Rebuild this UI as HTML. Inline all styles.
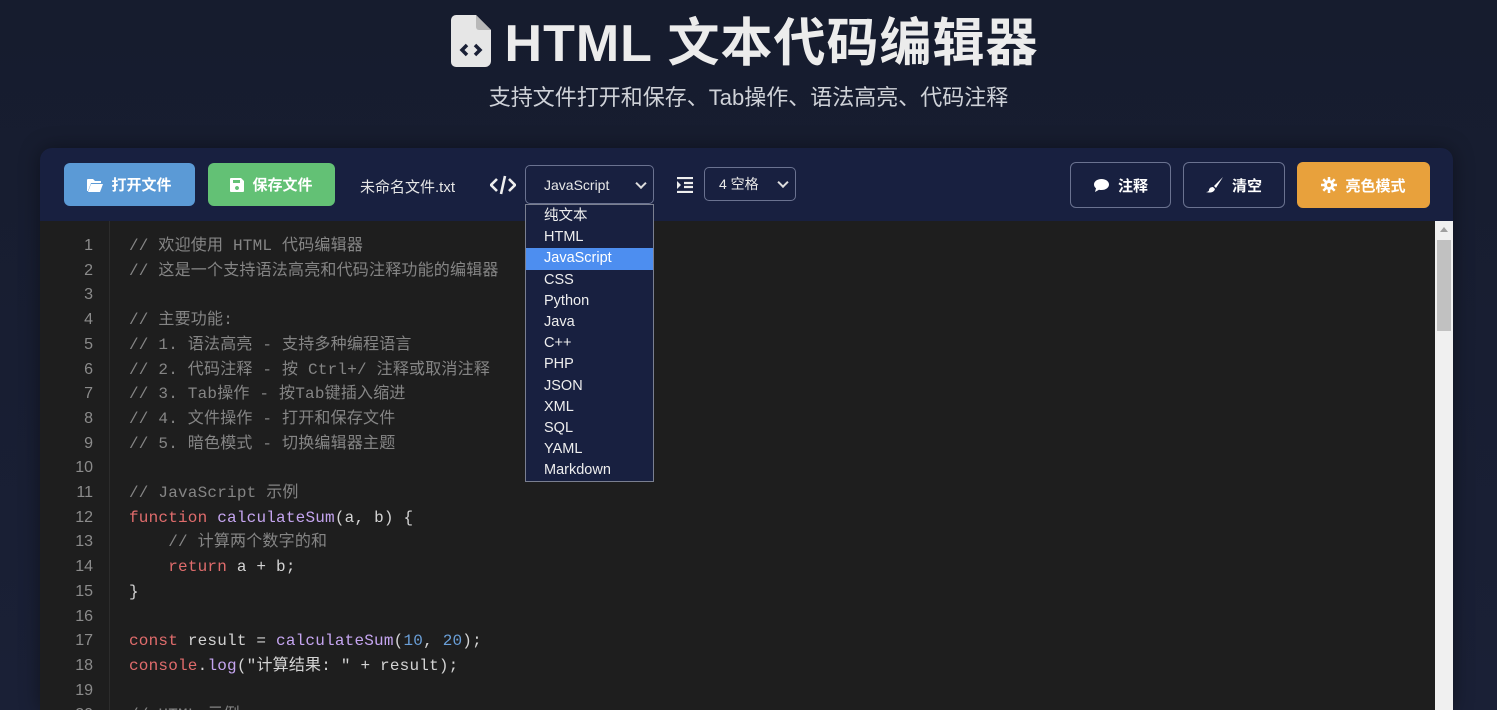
<!DOCTYPE html>
<html><head><meta charset="utf-8"><style>
*{box-sizing:border-box;margin:0;padding:0}
html,body{width:1497px;height:710px;overflow:hidden}
body{background:linear-gradient(180deg,#161c2e 0%,#1a2036 100%);font-family:"Liberation Sans","Noto Sans CJK SC",sans-serif;color:#e6e6e6;position:relative}
h1{position:absolute;top:1px;left:-4px;width:1497px;text-align:center;font-size:52px;font-weight:bold;color:#ececec;letter-spacing:1px}
.sub{position:absolute;top:80px;left:0;width:1497px;text-align:center;font-size:22px;color:#cfd2d8}
.panel{position:absolute;left:40px;top:148px;width:1413px;height:562px;background:#182040;border-radius:12px 12px 0 0;overflow:hidden;box-shadow:0 0 20px rgba(0,0,0,.4)}
.btn{position:absolute;border-radius:6px;font-size:15px;font-weight:bold;color:#fff;display:flex;align-items:center;justify-content:center;gap:8px}
.sel{position:absolute;border:1px solid #6a7290;border-radius:5px;background:#182040;font-size:14px;color:#e8e8e8;padding-left:18px;display:flex;align-items:center}
.sel:after{content:"";position:absolute;right:8px;top:50%;width:6px;height:6px;border-right:2px solid #ddd;border-bottom:2px solid #ddd;transform:translateY(-70%) rotate(45deg)}
.ob{background:transparent;border:1px solid #6a7290}
.editor{position:absolute;left:0;top:73px;width:1413px;height:500px;background:#1e1e1e}
.gut{position:absolute;left:0;top:0;width:70px;height:100%;background:#1e1e1e;border-right:1px solid #2c2c2c}
.ln,.code{position:absolute;top:13px;font-family:"Liberation Mono","Noto Sans CJK SC",monospace;font-size:16px;line-height:24.7px;white-space:pre}
.ln{left:0;width:53px;text-align:right;color:#8b8b8b;font-family:"Liberation Sans",sans-serif}
.code{left:89px;color:#d4d4d4;letter-spacing:0.2px}
.c{color:#858585}.k{color:#e06c6c}.f{color:#c5a5f0}.n{color:#6a9fd8}
.sb{position:absolute;left:1395px;top:0;width:18px;height:100%;background:#f0f0f0}
.dd{position:absolute;left:525px;top:204px;width:129px;height:278px;background:#182040;border:1px solid #7a7f90;font-size:14.5px;color:#eee;padding-top:1px}
.dd div{height:21.2px;line-height:21px;padding-left:18px}
.dd .hi{background:#4d8ef0;color:#fff}
</style></head><body>
<h1><svg width="40" height="52" viewBox="0 0 40 52" style="vertical-align:-6px;margin-right:14px"><path d="M5 0h20l15 15v31a6 6 0 0 1-6 6H5a5 5 0 0 1-5-5V5a5 5 0 0 1 5-5z" fill="#e6e6e6"/><path d="M25 0v12a3 3 0 0 0 3 3h12" fill="#b8b8b8"/><path d="M16 30l-5 5 5 5M24 30l5 5-5 5" stroke="#1a2036" stroke-width="3.5" fill="none"/></svg>HTML 文本代码编辑器</h1>
<div class="sub">支持文件打开和保存、Tab操作、语法高亮、代码注释</div>
<div class="panel">
<div class="btn" style="left:24px;top:15px;width:131px;height:43px;background:#5b9ad6"><svg width="16" height="14" viewBox="0 0 16 14"><path d="M0 2a1 1 0 0 1 1-1h5l2 2h6v2H4L1 13H0z M4 6h12l-3 8H1z" fill="#fff"/></svg>打开文件</div>
<div class="btn" style="left:168px;top:15px;width:127px;height:43px;background:#63c175"><svg width="14" height="14" viewBox="0 0 14 14"><path d="M1 0h10l3 3v10a1 1 0 0 1-1 1H1a1 1 0 0 1-1-1V1a1 1 0 0 1 1-1zM3 2v3h7V2zM7 8a2 2 0 1 0 0.01 0z" fill="#fff" fill-rule="evenodd"/></svg>保存文件</div>
<div style="position:absolute;left:320px;top:28px;font-size:15px;color:#e6e6e6">未命名文件.txt</div>
<svg style="position:absolute;left:450px;top:27px" width="26" height="20" viewBox="0 0 26 20"><path d="M7 4l-6 6 6 6M19 4l6 6-6 6M15 1l-4 18" stroke="#eee" stroke-width="2.6" fill="none"/></svg>
<div class="sel" style="left:485px;top:17px;width:129px;height:39px">JavaScript</div>
<svg style="position:absolute;left:637px;top:29px" width="16" height="16" viewBox="0 0 16 16"><path d="M0 1h16M7 6h9M7 10h9M0 15h16" stroke="#eee" stroke-width="2.2"/><path d="M0 4l4 4-4 4z" fill="#eee"/></svg>
<div class="sel" style="left:664px;top:19px;width:92px;height:34px;padding-left:14px">4 空格</div>
<div class="btn ob" style="left:1030px;top:14px;width:101px;height:46px"><svg width="17" height="15" viewBox="0 0 17 15"><path d="M8.5 1C4 1 1 3.5 1 6.5c0 1.5.8 2.8 2 3.7L2 14l4-2.3c.8.2 1.6.3 2.5.3 4.5 0 7.5-2.5 7.5-5.5S13 1 8.5 1z" fill="#fff"/></svg>注释</div>
<div class="btn ob" style="left:1143px;top:14px;width:102px;height:46px"><svg width="18" height="16" viewBox="0 0 18 16"><path d="M17 0L8 9l2 2 7-11z M7 10c-3 0-4 2-4 3 0 1.5-2 2-3 2 3 1 8 1 9-3z" fill="#fff"/></svg>清空</div>
<div class="btn" style="left:1257px;top:14px;width:133px;height:46px;background:#e8a13c"><svg width="16" height="16" viewBox="0 0 16 16"><circle cx="8" cy="8" r="5" fill="#fff"/><path d="M8 0v16M0 8h16M2.3 2.3l11.4 11.4M13.7 2.3L2.3 13.7" stroke="#fff" stroke-width="2.5"/><circle cx="8" cy="8" r="2" fill="#e8a13c"/></svg>亮色模式</div>
<div class="editor">
<div class="gut"></div>
<div class="ln">1
2
3
4
5
6
7
8
9
10
11
12
13
14
15
16
17
18
19
20</div>
<div class="code"><span class="c">// 欢迎使用 HTML 代码编辑器
// 这是一个支持语法高亮和代码注释功能的编辑器

// 主要功能:
// 1. 语法高亮 - 支持多种编程语言
// 2. 代码注释 - 按 Ctrl+/ 注释或取消注释
// 3. Tab操作 - 按Tab键插入缩进
// 4. 文件操作 - 打开和保存文件
// 5. 暗色模式 - 切换编辑器主题

// JavaScript 示例</span>
<span class="k">function</span> <span class="f">calculateSum</span>(a, b) {
    <span class="c">// 计算两个数字的和</span>
    <span class="k">return</span> a + b;
}

<span class="k">const</span> result = <span class="f">calculateSum</span>(<span class="n">10</span>, <span class="n">20</span>);
<span class="k">console</span>.<span class="f">log</span>("计算结果: " + result);

<span class="c">// HTML 示例</span></div>
<div class="sb"><div style="position:absolute;left:5px;top:6px;border:4px solid transparent;border-bottom:5px solid #a0a0a0;border-top:0"></div><div style="position:absolute;left:2px;top:19px;width:14px;height:91px;background:#c1c1c1"></div></div>
</div>
</div>
<div class="dd"><div>纯文本</div><div>HTML</div><div class="hi">JavaScript</div><div>CSS</div><div>Python</div><div>Java</div><div>C++</div><div>PHP</div><div>JSON</div><div>XML</div><div>SQL</div><div>YAML</div><div>Markdown</div></div>
</body></html>
